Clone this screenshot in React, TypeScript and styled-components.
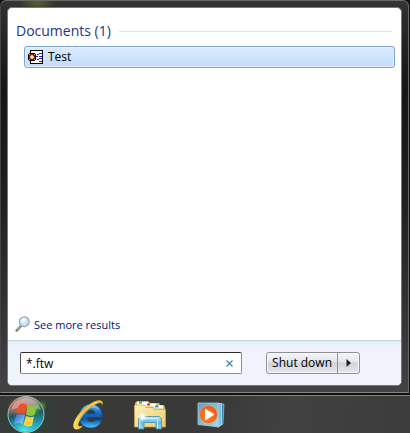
import React, { useState } from "react";
import styled, { createGlobalStyle } from "styled-components";

const GlobalStyle = createGlobalStyle`
  * { box-sizing: border-box; }
  body {
    margin: 0;
    background: #101010;
    font-family: "Open Sans", "Noto Sans", sans-serif;
    font-size: 12px;
    color: #000;
  }
  button, input { font: inherit; color: inherit; }
`;

const Desktop = styled.div`
  display: flex;
  flex-direction: column;
  min-height: 100vh;
`;

const StartMenu = styled.main`
  flex: 1;
  display: flex;
  margin: 0 1px 2px 0;
  padding: 6px;
  border: 1px solid #777;
  border-color: #686b67 #6b6b6b #858585 #444;
  border-radius: 6px 6px 0 0;
  background:
    radial-gradient(ellipse 18px 8px at 36px 2px, #59612b, transparent),
    linear-gradient(#343634 0, #2c2c2c 12px, #161616 90px, #202020 200px, #393939 340px, #434343 100%);
`;

const Panel = styled.div`
  flex: 1;
  display: flex;
  flex-direction: column;
  min-width: 0;
  overflow: hidden;
  border: 1px solid #777;
  border-radius: 5px;
  background: #fff;
`;

const Results = styled.section`
  flex: 1;
  display: flex;
  flex-direction: column;
  padding: 13px 6px 5px 8px;
`;

const Heading = styled.h2`
  display: flex;
  align-items: center;
  gap: 8px;
  margin: 0 3px 5px 0;
  font-size: 14px;
  line-height: 20px;
  font-weight: 400;
  color: #1e3287;

  &::after {
    content: "";
    flex: 1;
    height: 1px;
    background: #e2e2e2;
  }
`;

const ResultList = styled.ul`
  flex: 1;
  margin: 0;
  padding: 0 0 0 8px;
  list-style: none;
`;

const ResultItem = styled.button`
  display: flex;
  align-items: center;
  gap: 4px;
  width: 100%;
  height: 22px;
  padding: 0 2px 1px;
  border: 1px solid #7da2ce;
  border-radius: 3px;
  background: linear-gradient(#dcebfd, #c1dbfc);
  box-shadow: inset 0 0 0 1px #e6f1fd;
  text-align: left;
`;

const MoreLink = styled.a`
  display: flex;
  align-items: center;
  align-self: flex-start;
  gap: 3px;
  height: 22px;
  margin-left: -1px;
  color: #00117c;
  font-size: 11px;
  text-decoration: none;
`;

const Footer = styled.footer`
  display: flex;
  align-items: center;
  gap: 24px;
  height: 45px;
  padding: 0 41px 0 12px;
  border-top: 1px solid #c5d5e8;
  background: linear-gradient(#e1eaf5, #f0f3fb 5px);
`;

const SearchBox = styled.div`
  flex: 1;
  display: flex;
  align-items: center;
  min-width: 0;
  height: 22px;
  padding: 0 7px 0 5px;
  border: 1px solid #8e8f8f;
  border-top-color: #2c2c2c;
  border-left-color: #4c4c4c;
  border-radius: 2px;
  background: #fff;
`;

const SearchInput = styled.input`
  flex: 1;
  min-width: 0;
  padding: 0;
  border: 0;
  outline: 0;
  background: transparent;
`;

const ClearButton = styled.button`
  display: flex;
  padding: 0;
  border: 0;
  background: transparent;
`;

const SplitButton = styled.div`
  display: flex;
  height: 22px;
  border: 1px solid #8d9096;
  border-radius: 3px;
  background: linear-gradient(#f4f5f8, #e4e6ea 45%, #cfd2d7 50%, #e6e8ee);
  box-shadow: inset 0 0 0 1px #f7f8fb;
`;

const ShutDownButton = styled.button`
  padding: 0 5px;
  border: 0;
  background: transparent;
  line-height: 20px;
  white-space: nowrap;
`;

const ArrowButton = styled.button`
  display: flex;
  align-items: center;
  justify-content: center;
  width: 22px;
  padding: 0;
  border: 0;
  border-left: 1px solid #8d9096;
  background: transparent;
`;

const Taskbar = styled.nav`
  display: flex;
  align-items: center;
  height: 38px;
  border-top: 1px solid #858585;
  background:
    radial-gradient(ellipse 34px 26px at 26px 24px, #26453c, transparent),
    linear-gradient(100deg, #3a3938, #393939 50%, #414141 70%, #3c3c3c);
`;

const TaskButton = styled.button`
  display: flex;
  justify-content: center;
  width: 61px;
  padding: 0;
  border: 0;
  background: transparent;
`;

const StartButton = styled(TaskButton)`
  width: 52px;
  margin-right: 6px;
`;

function FamilyTreeIcon() {
  return (
    <svg width="17" height="16" viewBox="0 0 17 16" shapeRendering="crispEdges" aria-hidden="true">
      <path d="M3 1h13v14H3z" fill="#000" />
      <path d="M4 2h11v12H4z" fill="#fff" />
      <path d="M2 4h6v1h1v6H8v1H2v-1H1V5h1z" fill="#000" />
      <path d="M2 5h6v6H2z" fill="#a01010" />
      <path d="M2 5h1v1H2zM7 5h1v1H7zM2 10h1v1H2zM7 10h1v1H7z" fill="#e9c04a" />
      <path d="M4 6h2v1h1v2H6v1H4V9H3V7h1z" fill="#e9c04a" />
      <path d="M4 7h2v2H4z" fill="#fff" />
      <path d="M9 7h2v1H9zM10 5h2v1h-2zM12 4h3v1h-3zM12 7h3v1h-3zM10 10h2v1h-2zM12 9h3v1h-3zM12 12h3v1h-3z" fill="#1717d8" />
    </svg>
  );
}

function MagnifierIcon() {
  return (
    <svg width="16" height="16" viewBox="0 0 16 16" aria-hidden="true">
      <defs>
        <radialGradient id="lens" cx=".4" cy=".35">
          <stop offset="0" stopColor="#fff" />
          <stop offset="1" stopColor="#bedcf5" />
        </radialGradient>
      </defs>
      <path d="M1.600 14.600 6.200 9.600" stroke="#777" strokeWidth="2.400" strokeLinecap="round" />
      <path d="m2 13.800 4-4.200" stroke="#ccc" strokeWidth="1" />
      <circle cx="9.300" cy="5.700" r="4.900" fill="url(#lens)" stroke="#9aa6b5" strokeWidth="1.200" />
      <path d="M6.200 5.200a3.300 3.300 0 0 1 3-2.700" stroke="#fff" fill="none" />
    </svg>
  );
}

function StartOrb() {
  return (
    <svg width="40" height="38" viewBox="0 0 40 38" aria-hidden="true">
      <defs>
        <linearGradient id="orb" x1="0" y1="0" x2=".2" y2="1">
          <stop offset="0" stopColor="#bcb5ae" />
          <stop offset=".4" stopColor="#756d68" />
          <stop offset=".55" stopColor="#1f5367" />
          <stop offset="1" stopColor="#20bed0" />
        </linearGradient>
        <radialGradient id="orbGlow" cx=".45" cy="1" r=".55">
          <stop offset="0" stopColor="#53f4ef" />
          <stop offset="1" stopColor="#1696bd" stopOpacity="0" />
        </radialGradient>
        <radialGradient id="orbRed" cx=".5" cy=".45" r=".5">
          <stop offset="0" stopColor="#e9633a" />
          <stop offset="1" stopColor="#d45638" stopOpacity="0" />
        </radialGradient>
        <radialGradient id="greenGlow">
          <stop offset="0" stopColor="#4bc63b" />
          <stop offset="1" stopColor="#287524" stopOpacity="0" />
        </radialGradient>
        <linearGradient id="flagBlue" x1="0" y1="0" x2="1" y2="1">
          <stop offset="0" stopColor="#2c68c4" />
          <stop offset="1" stopColor="#8fd7fa" />
        </linearGradient>
      </defs>
      <ellipse cx="34" cy="10" rx="9" ry="7" fill="url(#greenGlow)" />
      <circle cx="20" cy="18.500" r="18" fill="url(#orb)" stroke="#a7b9bc" strokeWidth="1" />
      <circle cx="20" cy="18.500" r="17" fill="url(#orbGlow)" />
      <ellipse cx="15" cy="12" rx="14" ry="11" fill="url(#orbRed)" />
      <ellipse cx="29" cy="14" rx="8" ry="9" fill="url(#greenGlow)" opacity=".8" />
      <path d="M5 14Q8 3 20 2q12 1 15 12-15-7-30 0" fill="#fff" opacity=".3" />
      <path d="M13 9q4-2.500 8-.5L19 18q-4-2-8.500 0z" fill="#e9532b" />
      <path d="M22 9q4 3 9 1l-2.500 9q-5 2-8.500-.5z" fill="#8fc63b" />
      <path d="M10 19q5-2 9 0l-2.500 9q-4-2-8.500 0z" fill="url(#flagBlue)" />
      <path d="M20 20q4 2 8 .5L26 29.500q-4 2-8.500-.5z" fill="#ffd03c" />
    </svg>
  );
}

function ExplorerE() {
  return (
    <svg width="34" height="32" viewBox="0 0 34 32" aria-hidden="true">
      <defs>
        <linearGradient id="ieBlue" x1="0" y1="0" x2="0" y2="1">
          <stop offset="0" stopColor="#55aef0" />
          <stop offset=".4" stopColor="#1469c2" />
          <stop offset=".65" stopColor="#0d56a8" />
          <stop offset="1" stopColor="#4fcdfa" />
        </linearGradient>
        <linearGradient id="ieGold" x1="1" y1="0" x2="0" y2="1">
          <stop offset="0" stopColor="#e6b93c" />
          <stop offset=".5" stopColor="#e0aa25" />
          <stop offset="1" stopColor="#ffe05c" />
        </linearGradient>
      </defs>
      <path
        d="M30.500 18.500H15c.3 2.700 2 4 4.500 4 1.800 0 3.100-.6 4-1.800h6.500C28.500 26 24.500 29 19 29 12 29 7 24.300 7 17.500S12 5 19 5s11.800 5.200 11.500 13.500zM15 14.500h8c-.3-2.300-1.800-3.500-4-3.500s-3.600 1.200-4 3.500z"
        fill="url(#ieBlue)" stroke="#0a4288" strokeWidth=".7"
      />
      <path d="M9.500 11.500C12 7 16 5.500 20 6q5 .5 7.500 5-4-2.500-8-2.500t-10 3" fill="#a3d5f8" opacity=".6" />
      <path
        d="M28.500 9C31.500 4 29 2.800 24.500 5 16.500 9 8.500 18 6.500 24.500c-.9 3.200 1 3.700 5 1.700C7 31.800.8 31.800 1.300 26 2 19 11 8 21 3c8.500-4 12.500-1 7.500 6z"
        fill="url(#ieGold)"
      />
      <path d="M2.800 26C5 18 15 7 25 3" fill="none" stroke="#ffee9e" strokeWidth=".8" />
    </svg>
  );
}

function LibrariesIcon() {
  return (
    <svg width="34" height="30" viewBox="0 0 34 30" aria-hidden="true">
      <defs>
        <linearGradient id="folder" x1="0" y1="0" x2="1" y2="1">
          <stop offset="0" stopColor="#fff3b8" />
          <stop offset="1" stopColor="#e9ca69" />
        </linearGradient>
        <linearGradient id="stand" x1="0" y1="0" x2="0" y2="1">
          <stop offset="0" stopColor="#b5e6fa" />
          <stop offset=".5" stopColor="#68b9de" />
          <stop offset="1" stopColor="#8fd3f0" />
        </linearGradient>
        <radialGradient id="glint">
          <stop offset="0" stopColor="#fff" />
          <stop offset="1" stopColor="#fff" stopOpacity="0" />
        </radialGradient>
      </defs>
      <path d="M2 27V3l2-2h11l2 2h9l1 2h4l1 2v20z" fill="#d5b659" />
      <path d="M4 2h11v3H4zM12 3.500h11v3H12zM21 5.500h9v3h-9z" fill="#fff" />
      <path d="M6 1.500h3v2H6z" fill="#17b52b" />
      <path d="M14 3.500h3v2h-3z" fill="#d62e20" />
      <path d="M22 5.500h3.500v2H22z" fill="#2596e6" />
      <path d="M1.500 5h10l1.500 2.500h7l1.500 2h11V27h-31z" fill="url(#folder)" stroke="#c6a550" strokeWidth=".7" />
      <path d="M5.500 29V19l2-2.500h19l2 2.500v10H23v-6.500H11V29z" fill="url(#stand)" stroke="#3e8fb9" strokeWidth=".8" />
      <path d="M8 18.500h18M7 20v8M24.500 20v8" stroke="#e0f6ff" strokeWidth=".8" fill="none" />
      <circle cx="9.500" cy="17" r="4" fill="url(#glint)" />
      <path d="m9.500 11 .7 5.200 5.300.8-5.300.8-.7 5.200-.7-5.200-5.300-.8 5.300-.8z" fill="#fff" opacity=".85" />
      <path d="m6.500 14 6 6M12.500 14l-6 6" stroke="#fff" strokeWidth=".6" opacity=".8" />
    </svg>
  );
}

function MediaPlayerIcon() {
  return (
    <svg width="28" height="26" viewBox="0 0 28 26" aria-hidden="true">
      <defs>
        <linearGradient id="cover" x1="0" y1="0" x2="1" y2="1">
          <stop offset="0" stopColor="#619dbd" />
          <stop offset="1" stopColor="#a9daf0" />
        </linearGradient>
        <radialGradient id="orange" cx=".45" cy=".6" r=".6">
          <stop offset="0" stopColor="#ff8a2b" />
          <stop offset="1" stopColor="#e65a18" />
        </radialGradient>
      </defs>
      <path d="M20 2h7l-1 20-6 3z" fill="#3685ad" stroke="#a4d9ed" strokeWidth=".6" />
      <path d="M21 1.500h3.500V23L21 25z" fill="#78b9d8" stroke="#c6edfa" strokeWidth=".7" />
      <path d="M1 1h21v24L1 22.500z" fill="url(#cover)" stroke="#9ccce1" strokeWidth=".8" />
      <circle cx="11.500" cy="12.500" r="9" fill="url(#orange)" stroke="#f0b48c" strokeWidth=".5" />
      <path d="m8 6.500 9.500 6L8 18.500z" fill="#fff" />
    </svg>
  );
}

const taskItems = [
  { label: "Internet Explorer", Icon: ExplorerE },
  { label: "Windows Explorer", Icon: LibrariesIcon },
  { label: "Windows Media Player", Icon: MediaPlayerIcon },
];

export default function App() {
  const [query, setQuery] = useState("*.ftw");

  return (
    <Desktop>
      <GlobalStyle />
      <StartMenu>
        <Panel>
          <Results>
            <Heading>Documents (1)</Heading>
            <ResultList>
              <li>
                <ResultItem type="button">
                  <FamilyTreeIcon />
                  Test
                </ResultItem>
              </li>
            </ResultList>
            <MoreLink href="#results">
              <MagnifierIcon />
              See more results
            </MoreLink>
          </Results>
          <Footer>
            <SearchBox>
              <SearchInput
                type="text"
                aria-label="Search programs and files"
                value={query}
                onChange={(event) => setQuery(event.target.value)}
              />
              <ClearButton type="button" aria-label="Clear search" onClick={() => setQuery("")}>
                <svg width="9" height="9" viewBox="0 0 9 9" aria-hidden="true">
                  <path d="m1.500 1.500 6 6M7.500 1.500l-6 6" stroke="#4582b4" strokeWidth="1.200" />
                </svg>
              </ClearButton>
            </SearchBox>
            <SplitButton>
              <ShutDownButton type="button">Shut down</ShutDownButton>
              <ArrowButton type="button" aria-label="More shut down options">
                <svg width="5" height="8" viewBox="0 0 5 8" aria-hidden="true">
                  <path d="M.5 0v8L5 4z" fill="#222" />
                </svg>
              </ArrowButton>
            </SplitButton>
          </Footer>
        </Panel>
      </StartMenu>
      <Taskbar aria-label="Taskbar">
        <StartButton type="button" aria-label="Start">
          <StartOrb />
        </StartButton>
        {taskItems.map(({ label, Icon }) => (
          <TaskButton type="button" aria-label={label} key={label}>
            <Icon />
          </TaskButton>
        ))}
      </Taskbar>
    </Desktop>
  );
}
